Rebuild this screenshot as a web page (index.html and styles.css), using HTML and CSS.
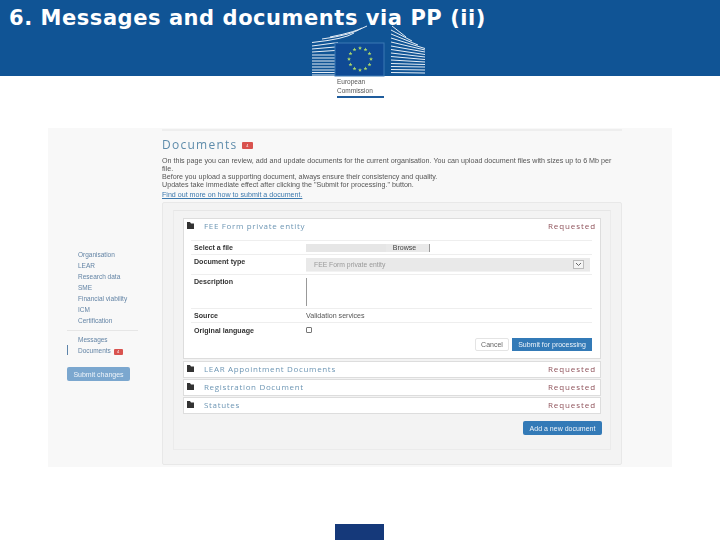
FILE: index.html
```html
<!DOCTYPE html>
<html lang="en">
<head>
    <meta charset="UTF-8">
    <title>Messages and documents via PP</title>
    <link rel="stylesheet" href="styles.css">
</head>
<body>
    <header class="banner">
        <h1 class="slide-title">6. Messages and documents via PP (ii)</h1>
    </header>

    <svg class="ec-logo" width="120" height="60" viewBox="310 20 120 60" aria-hidden="true">
        <defs>
            <polygon id="star" points="0,-1.9 0.6,-0.6 1.9,-0.5 0.9,0.4 1.2,1.7 0,1 -1.2,1.7 -0.9,0.4 -1.9,-0.5 -0.6,-0.6" fill="#a9d66a"/>
        </defs>
        <g class="ec-lines">
            <path d="M312 75H335M312 72.500H335M312 70H335M312 67H335M312 64H335M312 61H335M312 58H335M312 55H335"/>
            <path d="M312 52L335 50.500M312 49L335 47M312 46L338 42.500M312 42.500Q345 39 354 33M322 39Q352 35 362 28M330 37Q356 32 367 26"/>
            <path d="M391 72.500L425 73M391 69.500L425 70M391 66.500L425 67M391 63.500L425 64.500M391 60L425 62M391 56.500L425 59.500M391 53L425 57M391 49.500L425 54.500M391 46L425 52M391 42L425 50M391 38L425 48.500M391 34L418 45M391 30L412 41M392 26L406 37"/>
        </g>
        <rect class="ec-flag" x="335" y="43" width="49" height="33"/>
        <use href="#star" x="360" y="48"/>
        <use href="#star" x="365.500" y="49.500"/>
        <use href="#star" x="369.500" y="53.500"/>
        <use href="#star" x="371" y="59"/>
        <use href="#star" x="369.500" y="64.500"/>
        <use href="#star" x="365.500" y="68.500"/>
        <use href="#star" x="360" y="70"/>
        <use href="#star" x="354.500" y="68.500"/>
        <use href="#star" x="350.500" y="64.500"/>
        <use href="#star" x="349" y="59"/>
        <use href="#star" x="350.500" y="53.500"/>
        <use href="#star" x="354.500" y="49.500"/>
    </svg>
    <div class="ec-name">
        <span>European</span>
        <span>Commission</span>
    </div>

    <main class="capture">
        <nav class="side">
            <ul class="side-list">
                <li>Organisation</li>
                <li>LEAR</li>
                <li>Research data</li>
                <li>SME</li>
                <li>Financial viability</li>
                <li>ICM</li>
                <li>Certification</li>
            </ul>
            <ul class="side-list side-lower">
                <li>Messages</li>
                <li class="current">Documents <span class="badge badge-small">4</span></li>
            </ul>
            <button class="btn btn-pale">Submit changes</button>
        </nav>

        <section class="content">
            <h2 class="page-title">Documents <span class="badge">4</span></h2>
            <p class="intro">On this page you can review, add and update documents for the current organisation. You can upload document files with sizes up to 6 Mb per file.<br>
            Before you upload a supporting document, always ensure their consistency and quality.<br>
            Updates take immediate effect after clicking the "Submit for processing." button.</p>
            <a class="more-link">Find out more on how to submit a document.</a>

            <div class="outer-panel">
                <div class="inner-panel">
                    <article class="doc-card doc-open">
                        <div class="doc-head">
                            <svg class="folder" width="7" height="7" viewBox="0 0 7 7"><path d="M0 0H3L4 1.500H7V7H0Z"/></svg>
                            <span class="doc-name">FEE Form private entity</span>
                            <span class="doc-state">Requested</span>
                        </div>
                        <div class="doc-form">
                            <div class="row row-file">
                                <b>Select a file</b>
                                <div class="file-field"><span class="file-path"></span><span class="file-btn">Browse</span></div>
                            </div>
                            <div class="row row-type">
                                <b>Document type</b>
                                <div class="select-field">FEE Form private entity<span class="select-arrow"><svg width="7" height="5" viewBox="0 0 7 5"><path d="M1 1L3.500 3.500L6 1" fill="none" stroke="#666"/></svg></span></div>
                            </div>
                            <div class="row row-desc">
                                <b>Description</b>
                                <div class="desc-field"></div>
                            </div>
                            <div class="row row-source">
                                <b>Source</b>
                                <span>Validation services</span>
                            </div>
                            <div class="row row-lang">
                                <b>Original language</b>
                                <span class="check"></span>
                            </div>
                            <div class="form-actions">
                                <button class="btn btn-plain">Cancel</button>
                                <button class="btn btn-blue btn-submit">Submit for processing</button>
                            </div>
                        </div>
                    </article>

                    <article class="doc-card doc-closed">
                        <div class="doc-head">
                            <svg class="folder" width="7" height="7" viewBox="0 0 7 7"><path d="M0 0H3L4 1.500H7V7H0Z"/></svg>
                            <span class="doc-name">LEAR Appointment Documents</span>
                            <span class="doc-state">Requested</span>
                        </div>
                    </article>
                    <article class="doc-card doc-closed">
                        <div class="doc-head">
                            <svg class="folder" width="7" height="7" viewBox="0 0 7 7"><path d="M0 0H3L4 1.500H7V7H0Z"/></svg>
                            <span class="doc-name">Registration Document</span>
                            <span class="doc-state">Requested</span>
                        </div>
                    </article>
                    <article class="doc-card doc-closed">
                        <div class="doc-head">
                            <svg class="folder" width="7" height="7" viewBox="0 0 7 7"><path d="M0 0H3L4 1.500H7V7H0Z"/></svg>
                            <span class="doc-name">Statutes</span>
                            <span class="doc-state">Requested</span>
                        </div>
                    </article>

                    <div class="add-row">
                        <button class="btn btn-blue btn-add">Add a new document</button>
                    </div>
                </div>
            </div>
        </section>
    </main>

    <div class="foot-mark"></div>
</body>
</html>
```

FILE: styles.css
```css
* {
    box-sizing: border-box;
}

html, body {
    height: 540px;
}

body {
    margin: 0;
    padding: 0;
    position: relative;
    overflow: hidden;
    background: #fff;
    font-family: 'Liberation Sans', Arial, sans-serif;
    color: #444;
}

.banner {
    height: 76px;
    background: #105495;
    padding: 4px 0 0 9px;
}

.slide-title {
    position: relative;
    z-index: 2;
    margin: 0;
    font-family: 'DejaVu Sans', Verdana, sans-serif;
    font-size: 21px;
    line-height: 28px;
    letter-spacing: 0.55px;
    font-weight: bold;
    color: #fff;
}

/* logo sits over the banner edge */
.ec-logo {
    position: absolute;
    left: 310px;
    top: 20px;
}

.ec-lines path {
    fill: none;
    stroke: #e6eef6;
    stroke-width: 1;
}

.ec-flag {
    fill: #0f4a94;
    stroke: #3b78b4;
    stroke-width: 1;
}

.ec-name {
    position: absolute;
    left: 337px;
    top: 78px;
    width: 47px;
    height: 20px;
    border-bottom: 2px solid #1f5c9c;
    font-size: 6.500px;
    line-height: 8.500px;
    color: #555;
    filter: blur(0.3px);
}

.ec-name span {
    display: block;
}

.capture {
    display: flex;
    width: 624px;
    height: 339px;
    margin: 52px 0 0 48px;
    background: #f8f8f8;
    filter: blur(0.5px);
}

.side {
    width: 114px;
    padding: 121px 0 0 19px;
    font-size: 6.500px;
    color: #6384a5;
}

.side-list {
    list-style: none;
    margin: 0;
    padding: 0 0 4px 11px;
    width: 71px;
    border-bottom: 1px solid #e6e6e6;
}

.side-list li {
    height: 11px;
    line-height: 11px;
    white-space: nowrap;
}

.side-lower {
    margin-top: 3px;
    border-bottom: none;
    padding-bottom: 0;
}

.current {
    position: relative;
}

.current::before {
    content: "";
    position: absolute;
    left: -11px;
    top: 0;
    width: 1px;
    height: 10px;
    background: #5d84aa;
}

.badge {
    display: inline-block;
    vertical-align: 2px;
    width: 11px;
    height: 7px;
    margin-left: 0;
    background: #d9534f;
    border-radius: 1px;
    color: #fff;
    font-size: 4px;
    line-height: 7px;
    letter-spacing: 0;
    text-align: center;
    font-family: 'Liberation Sans', Arial, sans-serif;
}

.badge-small {
    width: 9px;
    height: 6px;
    line-height: 6px;
    vertical-align: 0;
    margin-left: 1px;
}

.btn {
    border: none;
    padding: 0;
    font-family: inherit;
    font-size: 7px;
    color: #eef4fa;
    border-radius: 2px;
}

.btn-pale {
    display: block;
    width: 63px;
    height: 14px;
    margin-top: 11px;
    background: #7ba7cf;
}

.btn-blue {
    background: #337ab7;
}

.btn-plain {
    width: 34px;
    height: 13px;
    background: #fff;
    border: 1px solid #e4e4e4;
    color: #666;
}

.btn-submit {
    width: 80px;
    height: 13px;
    border-radius: 0;
}

.btn-add {
    width: 79px;
    height: 14px;
}

.content {
    width: 460px;
    border-top: 2px solid #eee;
    margin-top: 1px;
}

.page-title {
    margin: 7px 0 0;
    height: 14px;
    font-family: 'Open Sans', sans-serif;
    font-size: 12px;
    line-height: 14px;
    font-weight: normal;
    letter-spacing: 1.25px;
    color: #5e8cab;
}

.intro {
    margin: 5px 0 0;
    font-size: 7.150px;
    line-height: 8px;
    color: #555;
    width: 456px;
}

.more-link {
    display: block;
    margin-top: 2px;
    height: 9px;
    font-size: 7.100px;
    line-height: 9px;
    color: #3b78ad;
    text-decoration: underline;
}

.outer-panel {
    height: 263px;
    margin-top: 2px;
    padding: 7px 10px 0;
    background: #f3f3f3;
    border: 1px solid #e8e8e8;
    border-radius: 2px;
}

.inner-panel {
    height: 240px;
    padding: 7px 9px 0;
    background: #f3f3f3;
    border: 1px solid #ebebeb;
    border-top-color: #e6e6e6;
}

.doc-card {
    height: 141px;
    background: #fff;
    border: 1px solid #ddd;
    margin-bottom: 1px;
}

.doc-open {
    margin-bottom: 2px;
}

.doc-closed {
    height: 17px;
}

.doc-head {
    display: flex;
    align-items: center;
    height: 13px;
    padding: 0 4px 0 3px;
}

.folder {
    fill: #333;
    flex: none;
}

.doc-name {
    margin-left: 10px;
    font-family: 'Open Sans', sans-serif;
    font-size: 8px;
    letter-spacing: 0.66px;
    color: #6d96b4;
}

.doc-state {
    margin-left: auto;
    font-family: 'Open Sans', sans-serif;
    font-size: 8px;
    letter-spacing: 0.92px;
    color: #8f525a;
}

.doc-form {
    margin: 8px 8px 0 7px;
    font-size: 7.100px;
    color: #555;
}

.row {
    display: grid;
    grid-template-columns: 112px 1fr;
    padding: 0 0 0 3px;
    border-top: 1px solid #eee;
}

.row b {
    color: #333;
}

.row-file {
    height: 14px;
    align-items: center;
}

.row-type {
    height: 20px;
    padding-top: 3px;
}

.row-desc {
    height: 34px;
    padding-top: 3px;
}

.row-source {
    height: 14px;
    align-items: center;
}

.row-lang {
    height: 16px;
    padding-top: 4px;
}

.file-field {
    display: flex;
    height: 8px;
}

.file-path {
    width: 80px;
    background: #e6e6e6;
}

.file-btn {
    width: 44px;
    padding-right: 6px;
    background: #e9e9e9;
    border-right: 1px solid #999;
    font-size: 7px;
    line-height: 8px;
    text-align: center;
    color: #444;
}

.select-field {
    display: flex;
    align-items: center;
    justify-content: space-between;
    width: 284px;
    height: 14px;
    padding: 0 6px 0 8px;
    background: #e9e9e9;
    border-bottom: 1px solid #f2f2f2;
    color: #999;
    font-size: 6.800px;
}

.select-arrow {
    display: flex;
    align-items: center;
    justify-content: center;
    width: 11px;
    height: 9px;
    background: #f4f4f4;
    border: 1px solid #bbb;
}

.desc-field {
    width: 1px;
    height: 28px;
    background: #999;
}

.check {
    display: block;
    width: 6px;
    height: 6px;
    background: #fff;
    border: 1px solid #777;
    border-radius: 1px;
}

.form-actions {
    display: flex;
    justify-content: flex-end;
    gap: 3px;
}

.add-row {
    display: flex;
    justify-content: flex-end;
    margin: 7px -1px 0 0;
}

.foot-mark {
    position: absolute;
    left: 335px;
    top: 524px;
    width: 49px;
    height: 16px;
    background: #15397a;
}
```
